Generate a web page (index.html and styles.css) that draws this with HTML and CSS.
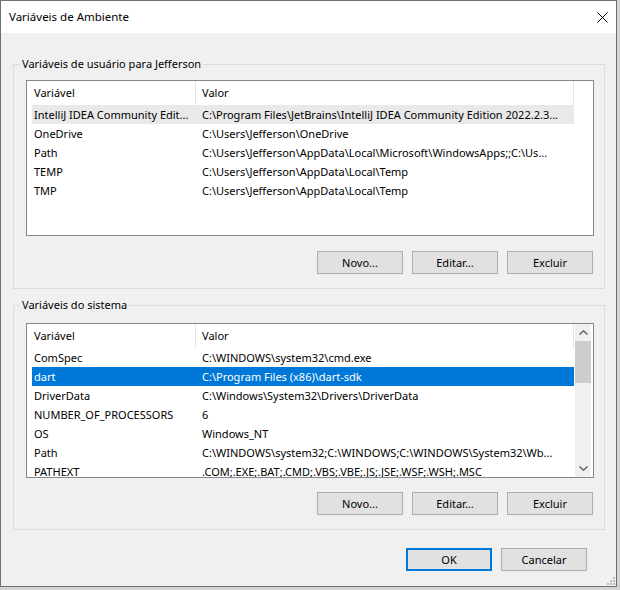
FILE: index.html
```html
<!DOCTYPE html>
<html lang="pt-BR">

<head>
    <meta charset="UTF-8">
    <title>Variáveis de Ambiente</title>
    <link rel="stylesheet" href="styles.css">
</head>

<body>
    <div class="window">
        <!-- Title bar -->
        <div class="titlebar">
            <span class="title">Variáveis de Ambiente</span>
            <svg class="close" width="11" height="11" viewBox="0 0 11 11">
                <path d="M0.5 0.5 L10.5 10.5 M10.5 0.5 L0.5 10.5" stroke="#000" stroke-width="1" fill="none" />
            </svg>
        </div>

        <div class="content">
            <!-- User variables -->
            <fieldset class="group group-user">
                <legend>Variáveis de usuário para Jefferson</legend>
                <div class="list list-user">
                    <div class="list-body">
                        <div class="row header">
                            <div class="cell name">Variável</div>
                            <div class="cell value">Valor</div>
                        </div>
                        <div class="row inactive">
                            <div class="cell name">IntelliJ IDEA Community Edit...</div>
                            <div class="cell value">C:\Program Files\JetBrains\IntelliJ IDEA Community Edition 2022.2.3...</div>
                        </div>
                        <div class="row">
                            <div class="cell name">OneDrive</div>
                            <div class="cell value">C:\Users\Jefferson\OneDrive</div>
                        </div>
                        <div class="row">
                            <div class="cell name">Path</div>
                            <div class="cell value">C:\Users\Jefferson\AppData\Local\Microsoft\WindowsApps;;C:\Us...</div>
                        </div>
                        <div class="row">
                            <div class="cell name">TEMP</div>
                            <div class="cell value">C:\Users\Jefferson\AppData\Local\Temp</div>
                        </div>
                        <div class="row">
                            <div class="cell name">TMP</div>
                            <div class="cell value">C:\Users\Jefferson\AppData\Local\Temp</div>
                        </div>
                    </div>
                </div>
                <div class="buttons">
                    <button class="btn">Novo...</button>
                    <button class="btn">Editar...</button>
                    <button class="btn">Excluir</button>
                </div>
            </fieldset>

            <!-- System variables -->
            <fieldset class="group group-system">
                <legend>Variáveis do sistema</legend>
                <div class="list list-system">
                    <div class="list-body">
                        <div class="row header">
                            <div class="cell name">Variável</div>
                            <div class="cell value">Valor</div>
                        </div>
                        <div class="row">
                            <div class="cell name">ComSpec</div>
                            <div class="cell value">C:\WINDOWS\system32\cmd.exe</div>
                        </div>
                        <div class="row selected">
                            <div class="cell name">dart</div>
                            <div class="cell value">C:\Program Files (x86)\dart-sdk</div>
                        </div>
                        <div class="row">
                            <div class="cell name">DriverData</div>
                            <div class="cell value">C:\Windows\System32\Drivers\DriverData</div>
                        </div>
                        <div class="row">
                            <div class="cell name">NUMBER_OF_PROCESSORS</div>
                            <div class="cell value">6</div>
                        </div>
                        <div class="row">
                            <div class="cell name">OS</div>
                            <div class="cell value">Windows_NT</div>
                        </div>
                        <div class="row">
                            <div class="cell name">Path</div>
                            <div class="cell value">C:\WINDOWS\system32;C:\WINDOWS;C:\WINDOWS\System32\Wb...</div>
                        </div>
                        <div class="row">
                            <div class="cell name">PATHEXT</div>
                            <div class="cell value">.COM;.EXE;.BAT;.CMD;.VBS;.VBE;.JS;.JSE;.WSF;.WSH;.MSC</div>
                        </div>
                    </div>
                    <div class="scrollbar">
                        <div class="arrow">
                            <svg width="9" height="5" viewBox="0 0 9 5"><path d="M0.5 4.5 L4.5 0.8 L8.5 4.5" stroke="#606060" stroke-width="1.4" fill="none" /></svg>
                        </div>
                        <div class="thumb"></div>
                        <div class="track"></div>
                        <div class="arrow">
                            <svg width="9" height="5" viewBox="0 0 9 5"><path d="M0.5 0.5 L4.5 4.2 L8.5 0.5" stroke="#606060" stroke-width="1.4" fill="none" /></svg>
                        </div>
                    </div>
                </div>
                <div class="buttons">
                    <button class="btn">Novo...</button>
                    <button class="btn">Editar...</button>
                    <button class="btn">Excluir</button>
                </div>
            </fieldset>

            <!-- Dialog buttons -->
            <div class="dialog-buttons">
                <button class="btn default">OK</button>
                <button class="btn">Cancelar</button>
            </div>
        </div>

        <!-- Resize grip -->
        <svg class="grip" width="8" height="8" viewBox="0 0 8 8">
            <rect x="6" y="0" width="2" height="2" fill="#bcbcbc" />
            <rect x="3" y="3" width="2" height="2" fill="#bcbcbc" />
            <rect x="6" y="3" width="2" height="2" fill="#bcbcbc" />
            <rect x="0" y="6" width="2" height="2" fill="#bcbcbc" />
            <rect x="3" y="6" width="2" height="2" fill="#bcbcbc" />
            <rect x="6" y="6" width="2" height="2" fill="#bcbcbc" />
        </svg>
    </div>
</body>

</html>
```

FILE: styles.css
```css
body {
    margin: 0;
    padding: 0;
    background-color: #d4d4d4;
    font-family: "Noto Sans", "Open Sans", sans-serif;
    font-size: 11px;
    color: #000;
}

.window {
    position: relative;
    width: 617px;
    height: 587px;
    box-sizing: border-box;
    border: 1px solid #6f6f6f;
    background-color: #f0f0f0;
    display: flex;
    flex-direction: column;
}

.titlebar {
    height: 32px;
    background-color: #fff;
    display: flex;
    align-items: center;
    justify-content: space-between;
    padding-left: 8px;
}

.title {
    font-size: 11.5px;
    line-height: 32px;
}

.close {
    margin-right: 8px;
    margin-top: 1px;
}

.content {
    padding: 0 11px 0 12px;
}

.group {
    margin: 0;
    padding: 8px 10px 14px 12px;
    border: 1px solid #dcdcdc;
    min-width: 0;
}

.group legend {
    padding: 0 2px;
    margin-left: -6px;
    line-height: 16px;
}

.group-user {
    margin-top: 23px;
}

.group-system {
    margin-top: 8px;
    padding-top: 10px;
}

.list {
    box-sizing: border-box;
    border: 1px solid #828790;
    background-color: #fff;
    display: flex;
    overflow: hidden;
}

.list-user {
    height: 156px;
}

.list-system {
    height: 155px;
}

.list-body {
    flex: 1;
    padding-left: 5px;
    overflow: hidden;
}

.row {
    display: flex;
    width: 542px;
    height: 19px;
    line-height: 19px;
    white-space: nowrap;
}

.row.header {
    height: 24px;
    line-height: 24px;
}

.cell {
    overflow: hidden;
    box-sizing: border-box;
}

.cell.name {
    width: 164px;
    padding-left: 2px;
}

.cell.value {
    width: 378px;
    padding-left: 6px;
}

.header .cell {
    border-right: 1px solid #e5e5e5;
}

.row.inactive {
    background-color: #e9e9e9;
}

.row.selected {
    background-color: #0078d7;
    color: #fff;
}

.scrollbar {
    width: 16px;
    margin-right: 2px;
    background-color: #f0f0f0;
    display: flex;
    flex-direction: column;
}

.scrollbar .arrow {
    height: 17px;
    display: flex;
    align-items: center;
    justify-content: center;
}

.scrollbar .thumb {
    height: 42px;
    background-color: #cdcdcd;
}

.scrollbar .track {
    flex: 1;
}

.buttons {
    display: flex;
    justify-content: flex-end;
    gap: 9px;
    margin-top: 15px;
    margin-right: 1px;
}

.group-system .buttons {
    margin-top: 14px;
}

.btn {
    width: 86px;
    height: 23px;
    box-sizing: border-box;
    background-color: #e1e1e1;
    border: 1px solid #adadad;
    font-family: inherit;
    font-size: 11px;
    color: #000;
    padding: 0;
}

.btn.default {
    border: 2px solid #0078d7;
}

.dialog-buttons {
    display: flex;
    justify-content: flex-end;
    gap: 9px;
    margin-top: 18px;
    margin-right: 18px;
}

.grip {
    position: absolute;
    right: 1px;
    bottom: 1px;
}
```
